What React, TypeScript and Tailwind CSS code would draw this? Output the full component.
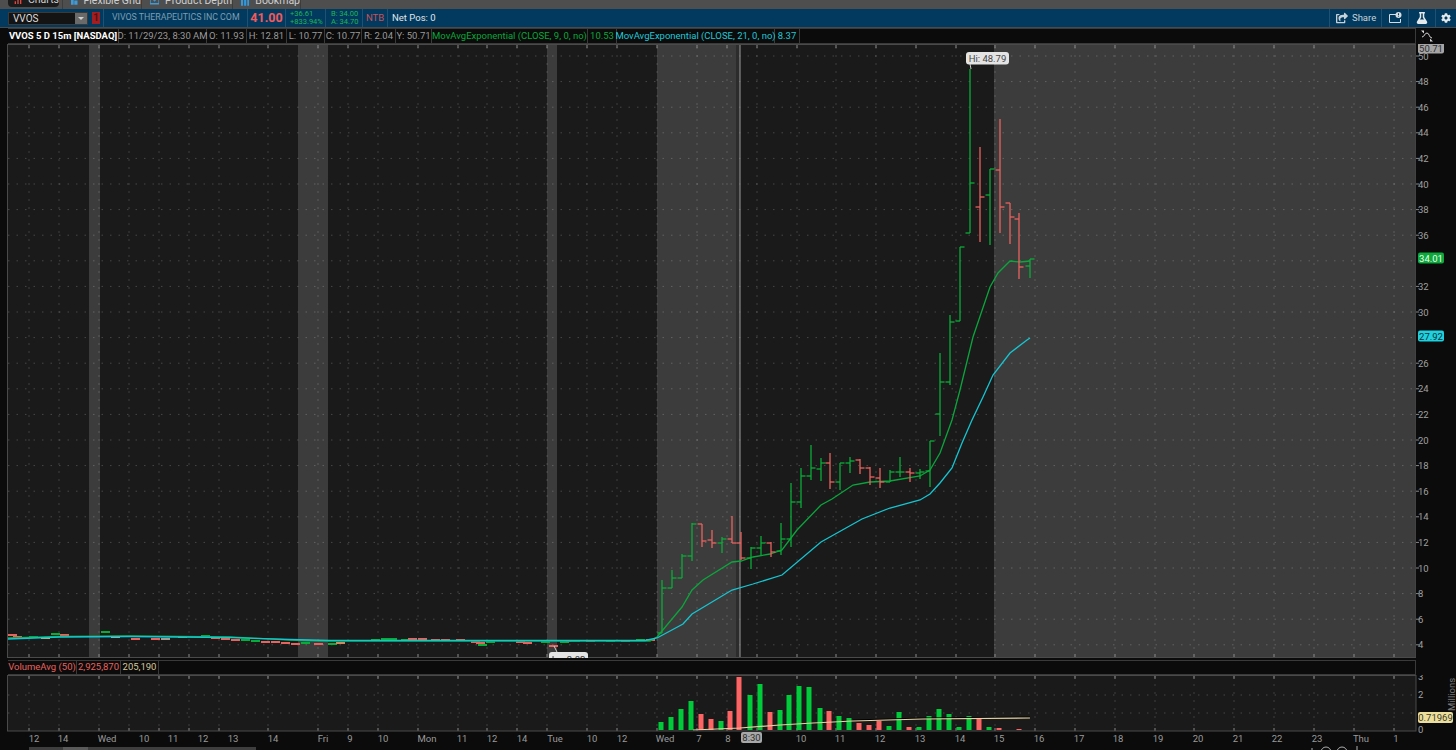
import React from 'react';
import { FaShareSquare, FaFlask, FaCog } from 'react-icons/fa';

const GREEN = '#08ad38';
const RED = '#e8625f';
const EMA9 = '#0aa63c';
const EMA21 = '#14c6d2';

const py = (p: number) => 56 + (50 - p) * 12.8;

// x, high, low, open, close (pixel y)
const bars: [number, number, number, number, number, string][] = [
  [662, 580, 633, 633, 588, GREEN],
  [672, 570, 588, 588, 578, GREEN],
  [682, 554, 578, 578, 556, GREEN],
  [692, 523, 561, 556, 524, GREEN],
  [702, 524, 547, 524, 541, RED],
  [712, 530, 548, 540, 543, RED],
  [722, 537, 553, 543, 539, GREEN],
  [732, 516, 543, 539, 543, RED],
  [741, 532, 560, 543, 558, RED],
  [751, 547, 569, 558, 548, GREEN],
  [761, 536, 555, 548, 543, GREEN],
  [771, 542, 557, 543, 552, RED],
  [781, 523, 555, 551, 539, GREEN],
  [791, 483, 547, 539, 502, GREEN],
  [801, 468, 508, 502, 476, GREEN],
  [811, 445, 480, 476, 468, GREEN],
  [821, 458, 481, 469, 463, GREEN],
  [830, 453, 489, 463, 482, RED],
  [840, 463, 490, 482, 463, GREEN],
  [850, 457, 473, 463, 461, GREEN],
  [860, 459, 474, 460, 468, RED],
  [870, 467, 485, 468, 477, RED],
  [880, 468, 488, 478, 482, RED],
  [890, 470, 482, 482, 472, GREEN],
  [900, 457, 477, 472, 472, GREEN],
  [910, 468, 482, 472, 473, RED],
  [920, 469, 479, 473, 472, GREEN],
  [930, 441, 487, 471, 441, GREEN],
  [940, 353, 436, 414, 382, GREEN],
  [950, 315, 385, 382, 322, GREEN],
  [960, 247, 321, 321, 247, GREEN],
  [970, 69, 233, 233, 183, GREEN],
  [980, 147, 242, 207, 197, RED],
  [990, 169, 245, 195, 169, GREEN],
  [1000, 119, 233, 170, 207, RED],
  [1010, 203, 244, 203, 217, RED],
  [1019, 213, 279, 219, 267, RED],
  [1030, 259, 278, 266, 259, GREEN],
];

// the flat days before the run-up, only a tick each
const flat: [number, number, string][] = [
  [12, 634, RED], [17, 636, RED], [33, 636, GREEN], [45, 637, '#c9a98a'], [55, 633, GREEN], [64, 634, RED],
  [105, 631, GREEN], [115, 636, '#c9a98a'], [135, 638, RED], [155, 638, RED], [165, 638, '#a09a90'], [182, 636, '#c9a98a'],
  [205, 635, GREEN], [215, 637, RED], [225, 638, RED], [235, 639, RED], [245, 639, GREEN], [255, 640, GREEN],
  [265, 641, RED], [275, 641, RED], [285, 642, RED], [295, 643, RED], [305, 642, GREEN], [318, 643, RED],
  [332, 643, GREEN], [340, 642, '#d08a60'], [375, 639, GREEN], [385, 638, GREEN], [392, 638, GREEN], [405, 639, GREEN],
  [412, 638, RED], [422, 638, RED], [435, 639, RED], [445, 639, RED], [460, 639, RED], [475, 641, RED],
  [480, 642, RED], [482, 644, GREEN], [490, 641, GREEN], [520, 641, RED], [527, 642, RED], [545, 641, GREEN],
  [553, 645, RED], [564, 641, GREEN], [570, 640, RED], [575, 640, GREEN], [590, 640, RED], [610, 640, GREEN],
  [625, 640, RED], [640, 639, GREEN], [650, 639, RED],
];

const ema9Line =
  '8,638 60,636.5 130,636 230,637 290,640 320,641 650,641 657,637 682,607 692,590 703,580 732,562 741,561 753,557 770,554 782,550 797,530 821,505 832,499 853,485 870,482 890,481 920,476 930,470 940,453 952,420 960,390 973,337 990,287 998,273 1010,261 1020,262 1030,261';
const ema21Line =
  '8,639 60,637 130,636.5 230,637.5 290,639.5 330,640.5 645,640.5 657,638 683,624 692,614 732,590 753,584 782,575 821,542 862,519 890,508 920,500 930,494 940,483 952,468 962,443 972,420 983,397 993,375 1010,353 1027,340 1030,338';

const vTicks = [
  29, 59, 99, 129, 159, 189, 219, 268, 318, 348, 378, 418, 458, 487, 517, 547, 587, 617, 657, 697, 727, 757, 797, 836,
  876, 916, 956, 995, 1035, 1075, 1115, 1155, 1194, 1234, 1274, 1314, 1354, 1394,
];

const shades: [number, number][] = [
  [89, 100],
  [298, 328],
  [547, 557],
  [657, 736],
  [994, 1416],
];

const timeLabels: [number, string][] = [
  [34, '12'], [63, '14'], [107, 'Wed'], [144, '10'], [173, '11'], [203, '12'], [233, '13'], [273, '14'], [323, 'Fri'],
  [350, '9'], [383, '10'], [427, 'Mon'], [462, '11'], [492, '12'], [522, '14'], [555, 'Tue'], [592, '10'], [622, '12'],
  [665, 'Wed'], [699, '7'], [728, '8'], [801, '10'], [840, '11'], [880, '12'], [920, '13'], [960, '14'], [999, '15'],
  [1039, '16'], [1079, '17'], [1118, '18'], [1158, '19'], [1198, '20'], [1238, '21'], [1277, '22'], [1317, '23'],
  [1361, 'Thu'], [1396, '1'],
];

// x, top of bar, green or red
const volume: [number, number, boolean][] = [
  [661, 722, true], [671, 717, true], [681, 709, true], [691, 701, true], [701, 714, false], [711, 719, false],
  [721, 721, true], [730, 711, false], [739, 677, false], [750, 695, true], [760, 684, true], [770, 712, false],
  [780, 710, true], [789, 695, true], [799, 686, true], [809, 687, true], [820, 708, true], [829, 711, false],
  [839, 716, true], [849, 718, true], [859, 723, false], [869, 725, false], [879, 721, false], [889, 726, true],
  [899, 712, true], [909, 727, false], [919, 727, true], [929, 716, true], [939, 709, true], [949, 714, true],
  [959, 727, true], [969, 716, true], [979, 718, false], [989, 727, true], [999, 728, false], [1019, 729, false],
];

const cell = 'flex items-center justify-center shrink-0 h-full border-y border-r border-[#3a3a3a] whitespace-nowrap';
const sep = 'w-px h-full shrink-0 bg-[#1d5272]';
const tab = 'shrink-0 whitespace-nowrap border-r border-[#3c3c3c] pl-[8px] flex items-center gap-[6px] h-[20px] -mt-[9px]';

function TabBar() {
  return (
    <div className="h-[9px] shrink-0 overflow-hidden bg-[#4e4e4e] flex text-[10.500px] text-[#cfcfcf]">
      <div className="w-[63px] shrink-0 border-r border-[#3c3c3c] pl-[8px]">
        <div className="flex items-center gap-[6px] h-[20px] -mt-[13px] pl-[6px] pt-[6px] w-[51px] bg-[#1b1b1b] rounded">
          <svg width="12" height="12" viewBox="0 0 12 12">
            <path d="M1 8h2v4H1zM5 5h2v7H5zM9 2h2v10H9z" fill="#e2463f" />
          </svg>
          Charts
        </div>
      </div>
      <div className={`${tab} w-[79px]`}>
        <svg width="12" height="14" viewBox="0 0 12 14">
          <path d="M0 0h5v14H0zM6 0h6v6H6zM6 7h6v7H6z" fill="#3f9ad8" />
        </svg>
        Flexible Grid
      </div>
      <div className={`${tab} w-[91px]`}>
        <svg width="13" height="14" viewBox="0 0 13 14">
          <path d="M0 0h13v11H0z" fill="none" stroke="#3f9ad8" strokeWidth="2" />
          <path d="M3 3l3.500 4L10 3" fill="none" stroke="#3f9ad8" strokeWidth="1.500" />
        </svg>
        Product Depth
      </div>
      <div className={`${tab} w-[68px]`}>
        <svg width="12" height="14" viewBox="0 0 12 14">
          <path d="M0 4h3v10H0zM4.500 0h3v14h-3zM9 2h3v12H9z" fill="#2f9ae0" />
        </svg>
        Bookmap
      </div>
    </div>
  );
}

function SymbolBar() {
  return (
    <div className="h-[18px] shrink-0 bg-[#013a5e] flex items-center pl-[8px] text-[#d5dde3]">
      <div className="w-[80px] h-[13px] shrink-0 bg-[#141414] border border-[#3a3a3a] flex items-center justify-between">
        <span className="pl-[4px] text-[10px] text-[#ddd]">VVOS</span>
        <span className="w-[12px] h-full bg-[#6a6a6a] flex items-center justify-center">
          <span className="border-x-[3px] border-t-[3px] border-x-transparent border-t-[#d0d0d0]" />
        </span>
      </div>
      <div className="ml-[4px] w-[8px] h-[12px] shrink-0 bg-[#a11f22] text-[#5c0d0f] text-[10px] leading-[12px] text-center font-bold">1</div>
      <div className={`ml-[3px] ${sep}`} />
      <div className="w-[143px] shrink-0 pl-[8px] text-[8.800px] text-[#7f9cb0] whitespace-nowrap">VIVOS THERAPEUTICS INC COM</div>
      <div className={sep} />
      <div className="w-[37px] shrink-0 text-center text-[12.500px] font-bold text-[#f25a5e]">41.00</div>
      <div className={sep} />
      <div className="w-[39px] shrink-0 pl-[4px] text-[7.500px] leading-[8px] text-[#22b455] whitespace-nowrap">
        <div>+36.61</div>
        <div>+833.94%</div>
      </div>
      <div className={sep} />
      <div className="w-[36px] shrink-0 pl-[5px] text-[7.500px] leading-[8px] text-[#22b455] whitespace-nowrap">
        <div>B: 34.00</div>
        <div>A: 34.70</div>
      </div>
      <div className={sep} />
      <div className="w-[24px] shrink-0 text-center text-[9.500px] text-[#c9515a]">NTB</div>
      <div className={sep} />
      <div className="pl-[4px] text-[9.500px] text-[#e0e6ea] whitespace-nowrap">Net Pos: 0</div>
      <div className="ml-auto flex items-center h-full">
        <div className={sep} />
        <div className="w-[51px] flex items-center gap-[4px] pl-[6px] text-[9.500px] text-[#c5d2da]">
          <FaShareSquare size={12} />
          Share
        </div>
        <div className={sep} />
        <div className="w-[26px] flex justify-center">
          <svg width="13" height="12" viewBox="0 0 13 12">
            <path d="M.5 2.500h7M.5 2.500v8h11V7" fill="none" stroke="#d5dde3" />
            <circle cx="9.500" cy="3" r="3" fill="#d5dde3" />
            <path d="M9.500 1.300v2M9.500 4v.6" stroke="#013a5e" />
          </svg>
        </div>
        <div className={sep} />
        <div className="w-[26px] flex justify-center text-[#e4e9ec]">
          <FaFlask size={12} />
        </div>
        <div className={sep} />
        <div className="w-[20px] flex justify-center text-[#e4e9ec]">
          <FaCog size={10} />
        </div>
      </div>
    </div>
  );
}

function StudyRow() {
  return (
    <div className="h-[16px] shrink-0 flex bg-[#0b0b0b] text-[9.500px] text-[#9a9a9a] pl-[8px]">
      <div className={`${cell} w-[111px] font-bold text-white`}>VVOS 5 D 15m [NASDAQ]</div>
      <div className={`${cell} w-[88px]`}>D: 11/29/23, 8:30 AM</div>
      <div className={`${cell} w-[40px]`}>O: 11.93</div>
      <div className={`${cell} w-[40px]`}>H: 12.81</div>
      <div className={`${cell} w-[38px]`}>L: 10.77</div>
      <div className={`${cell} w-[37px]`}>C: 10.77</div>
      <div className={`${cell} w-[34px]`}>R: 2.04</div>
      <div className={`${cell} w-[36px]`}>Y: 50.71</div>
      <div className={`${cell} w-[156px] text-[#0aa63c]`}>MovAvgExponential (CLOSE, 9, 0, no)</div>
      <div className={`${cell} w-[29px] text-[#0aa63c]`}>10.53</div>
      <div className={`${cell} w-[158px] text-[#1fc8d8]`}>MovAvgExponential (CLOSE, 21, 0, no)</div>
      <div className={`${cell} w-[25px] text-[#1fc8d8]`}>8.37</div>
      <div className="flex-1 border-y border-r border-[#3a3a3a]" />
      <div className="w-[40px] shrink-0 flex items-center pl-[4px]">
        <svg width="14" height="12" viewBox="0 0 14 12" fill="none" stroke="#d8d8d8">
          <path d="M2 7c2.500 0 2.500-4 5-4s2 5 5 5" strokeWidth="1" />
          <path d="M1 .5h3v3zM13 11.500h-3v-3z" fill="#d8d8d8" stroke="none" />
        </svg>
      </div>
    </div>
  );
}

function Badge({ x, y, w, fill, text, color }: { x: number; y: number; w: number; fill: string; text: string; color: string }) {
  return (
    <g>
      <rect x={x} y={y - 5.5} width={w} height={11} rx={2} fill={fill} />
      <text x={x + w / 2} y={y + 3.5} textAnchor="middle" fontSize="9.500" fill={color}>
        {text}
      </text>
    </g>
  );
}

function PriceChart() {
  const prices: number[] = [];
  for (let p = 50; p >= 4; p -= 2) prices.push(p);

  return (
    <svg width="1456" height="614" viewBox="0 44 1456 614" className="shrink-0">
      <rect x="0" y="44" width="1456" height="614" fill="#0b0b0b" />
      <rect x="8" y="44" width="1408" height="614" fill="#1a1a1a" />
      {shades.map(([a, b]) => (
        <rect key={a} x={a} y="45" width={b - a} height="612" fill="#3c3c3c" />
      ))}
      <rect x="736" y="45" width="4" height="612" fill="#2c2c2c" />

      {prices.map((p) => (
        <line key={p} x1="8" x2="1416" y1={py(p)} y2={py(p)} stroke="#fff" strokeOpacity="0.2" strokeDasharray="1.500 7" />
      ))}
      {vTicks.map((x) => (
        <g key={x}>
          <line x1={x} x2={x} y1="47" y2="654" stroke="#fff" strokeOpacity="0.17" strokeDasharray="2 6" />
          <line x1={x} x2={x} y1="45" y2="48" stroke="#8a8a8a" />
          <line x1={x} x2={x} y1="654" y2="657" stroke="#8a8a8a" />
        </g>
      ))}
      <line x1="740" x2="740" y1="45" y2="657" stroke="#9a9a9a" />
      <rect x="7.500" y="44.500" width="1408.500" height="613" fill="none" stroke="#4a4a4a" />

      {flat.map(([x, y, c], i) => (
        <rect key={i} x={x - 4} y={y} width={9} height={2} fill={c} />
      ))}
      <polyline points={ema9Line} fill="none" stroke={EMA9} strokeWidth="1.300" />
      <polyline points={ema21Line} fill="none" stroke={EMA21} strokeWidth="1.300" />
      {bars.map(([x, hi, lo, open, close, c]) => (
        <g key={x} stroke={c} strokeWidth="1.300">
          <line x1={x} x2={x} y1={hi} y2={lo} />
          <line x1={x - 4.500} x2={x} y1={open} y2={open} />
          <line x1={x} x2={x + 4.500} y1={close} y2={close} />
        </g>
      ))}

      {/* high and low bubbles */}
      <path d="M970 64l1 5" stroke="#ccc" />
      <rect x="966" y="52" width="43" height="12.500" rx="3" fill="#e4e4e4" />
      <text x="987.500" y="61.500" textAnchor="middle" fontSize="9.500" fill="#444">
        Hi: 48.79
      </text>
      <path d="M554 646l3 6" stroke="#ccc" />
      <rect x="549" y="652" width="39" height="12" rx="3" fill="#e4e4e4" />
      <text x="568.500" y="663" textAnchor="middle" fontSize="9.500" fill="#333">
        Lo: 3.82
      </text>

      {/* price axis */}
      <rect x="1416" y="44" width="40" height="614" fill="#0b0b0b" />
      {prices
        .filter((p) => p !== 34 && p !== 28)
        .map((p) => (
          <g key={p}>
            <line x1="1416" x2="1419" y1={py(p)} y2={py(p)} stroke="#888" />
            <text x="1418" y={py(p) + 3.500} fontSize="9.500" fill="#a0a0a0">
              {p}
            </text>
          </g>
        ))}
      <Badge x={1418} y={48} w={26} fill="#a5a5a5" text="50.71" color="#2e2e2e" />
      <Badge x={1418} y={258} w={26} fill="#0ea83c" text="34.01" color="#e8ffe8" />
      <Badge x={1418} y={336} w={26} fill="#1fd0de" text="27.92" color="#063038" />
    </svg>
  );
}

function VolumeHeader() {
  return (
    <div className="h-[15px] shrink-0 mt-[2px] flex bg-[#0b0b0b] text-[9.500px] pl-[8px] pr-[40px]">
      <div className={`${cell} w-[69px] text-[#e8625f]`}>VolumeAvg (50)</div>
      <div className={`${cell} w-[44px] text-[#e8625f]`}>2,925,870</div>
      <div className={`${cell} w-[38px] text-[#d8c89a]`}>205,190</div>
      <div className="flex-1 border-y border-r border-[#3a3a3a]" />
    </div>
  );
}

function VolumeChart() {
  return (
    <svg width="1456" height="75" viewBox="0 675 1456 75" className="shrink-0">
      <rect x="0" y="675" width="1456" height="75" fill="#0b0b0b" />
      <rect x="8" y="676" width="1408" height="55" fill="#1a1a1a" />
      {[695, 713].map((y) => (
        <line key={y} x1="8" x2="1416" y1={y} y2={y} stroke="#fff" strokeOpacity="0.2" strokeDasharray="1.500 7" />
      ))}
      {vTicks.map((x) => (
        <g key={x}>
          <line x1={x} x2={x} y1="676" y2="731" stroke="#fff" strokeOpacity="0.17" strokeDasharray="2 6" />
          <line x1={x} x2={x} y1="676" y2="679" stroke="#8a8a8a" />
          <line x1={x} x2={x} y1="728" y2="731" stroke="#8a8a8a" />
        </g>
      ))}
      {volume.map(([x, top, up]) => (
        <rect key={x} x={x - 2.500} y={top} width="5" height={730 - top} fill={up ? '#00cc3a' : '#ff6464'} />
      ))}
      <polyline points="853,720 923,718 1030,717" fill="none" stroke="#000" strokeWidth="1" />
      <polyline
        points="693,730 740,728 780,725 813,723 853,721 923,719 1030,718"
        fill="none"
        stroke="#e4d3a2"
        strokeWidth="1.200"
      />
      <rect x="7.500" y="675.500" width="1408.500" height="55.500" fill="none" stroke="#4a4a4a" />

      {/* volume axis */}
      {[
        ['3', 680],
        ['2', 698],
        ['0', 733],
      ].map(([t, y]) => (
        <text key={t} x="1418" y={y} fontSize="9.500" fill="#a0a0a0">
          {t}
        </text>
      ))}
      <text x="0" y="0" fontSize="9.500" fill="#777" transform="translate(1455 711) rotate(-90)">
        Millions
      </text>
      <rect x="1418" y="712" width="35" height="11" rx="2" fill="#ecdf9c" />
      <text x="1435.500" y="721" textAnchor="middle" fontSize="9.500" fill="#3a3a2a">
        0.71969
      </text>

      {/* time axis */}
      {timeLabels.map(([x, t]) => (
        <text key={`${x}${t}`} x={x} y="742" textAnchor="middle" fontSize="9.500" fill="#9a9a9a">
          {t}
        </text>
      ))}
      <rect x="741" y="732" width="21" height="11" rx="2" fill="#a8a8a8" />
      <text x="751.500" y="741" textAnchor="middle" fontSize="9.500" fill="#2e2e2e">
        8:30
      </text>

      {/* scrollbar and zoom buttons, cut by the bottom edge */}
      <rect x="29" y="747" width="227" height="3" fill="#3e3e3e" />
      <rect x="63" y="747" width="25" height="3" fill="#5a5a5a" />
      <g fill="none" stroke="#b0b0b0">
        <circle cx="1326" cy="752" r="5" />
        <circle cx="1342" cy="752" r="5" />
        <path d="M1312 750v-2M1357 750v-4" />
      </g>
    </svg>
  );
}

export default function App() {
  return (
    <div className="w-[1456px] h-[750px] overflow-hidden flex flex-col bg-[#0b0b0b] font-['Roboto',sans-serif]">
      <TabBar />
      <SymbolBar />
      <div className="h-px shrink-0 bg-[#4a4a4a]" />
      <StudyRow />
      <PriceChart />
      <VolumeHeader />
      <VolumeChart />
    </div>
  );
}
